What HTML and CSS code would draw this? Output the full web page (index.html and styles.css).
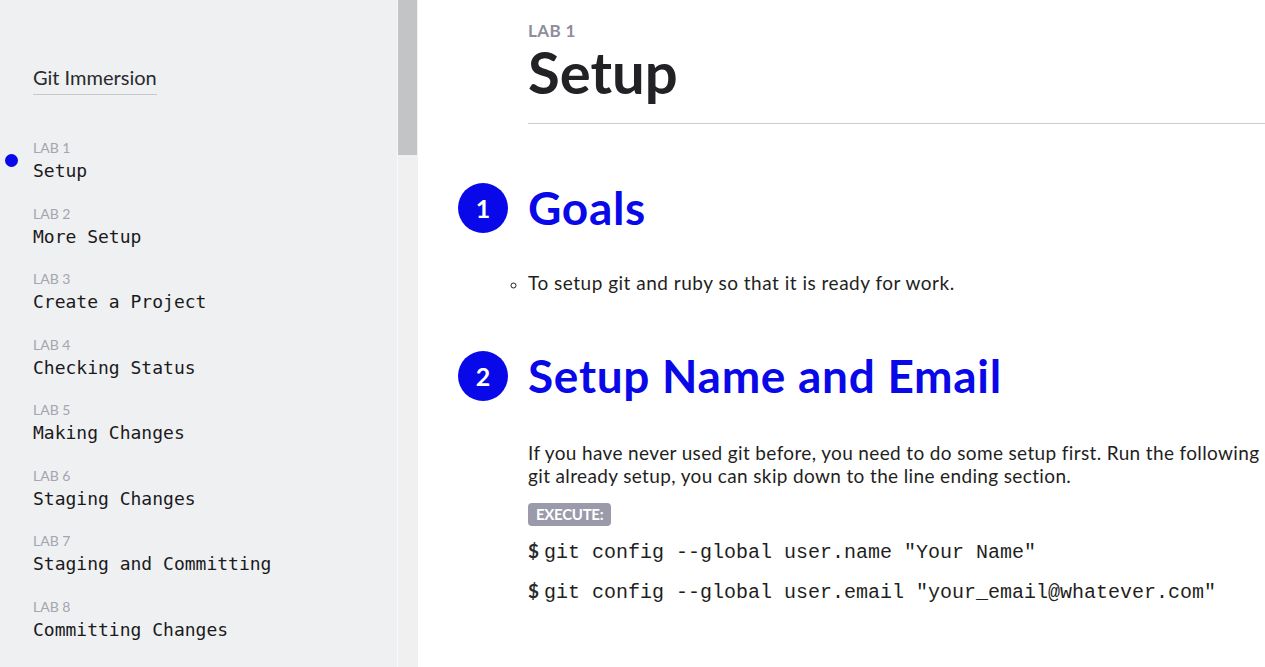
FILE: index.html
```html
<!DOCTYPE html>
<html lang="en">
<head>
<meta charset="utf-8">
<title>Git Immersion - Setup</title>
<link rel="stylesheet" href="styles.css">
</head>
<body>
<aside class="sidebar">
  <nav class="sidebar-inner">
    <a class="brand" href="#">Git Immersion</a>
    <ul class="labs">
      <li class="lab active"><span class="lab-num">LAB 1</span><span class="lab-title">Setup</span></li>
      <li class="lab"><span class="lab-num">LAB 2</span><span class="lab-title">More Setup</span></li>
      <li class="lab"><span class="lab-num">LAB 3</span><span class="lab-title">Create a Project</span></li>
      <li class="lab"><span class="lab-num">LAB 4</span><span class="lab-title">Checking Status</span></li>
      <li class="lab"><span class="lab-num">LAB 5</span><span class="lab-title">Making Changes</span></li>
      <li class="lab"><span class="lab-num">LAB 6</span><span class="lab-title">Staging Changes</span></li>
      <li class="lab"><span class="lab-num">LAB 7</span><span class="lab-title">Staging and Committing</span></li>
      <li class="lab"><span class="lab-num">LAB 8</span><span class="lab-title">Committing Changes</span></li>
      <li class="lab"><span class="lab-num">LAB 9</span><span class="lab-title">Changes, not Files</span></li>
      <li class="lab"><span class="lab-num">LAB 10</span><span class="lab-title">History</span></li>
      <li class="lab"><span class="lab-num">LAB 11</span><span class="lab-title">Aliases</span></li>
      <li class="lab"><span class="lab-num">LAB 12</span><span class="lab-title">Getting Old Versions</span></li>
    </ul>
  </nav>
  <div class="scrollbar"><div class="scroll-thumb"></div></div>
</aside>
<main class="main">
  <article class="content">
    <header class="page-head">
      <div class="page-lab">LAB 1</div>
      <h1 class="page-title">Setup</h1>
    </header>

    <section class="step">
      <h2 class="step-head"><span class="step-num">1</span><span class="step-title">Goals</span></h2>
      <ul class="goals">
        <li>To setup git and ruby so that it is ready for work.</li>
      </ul>
    </section>

    <section class="step">
      <h2 class="step-head"><span class="step-num">2</span><span class="step-title">Setup Name and Email</span></h2>
      <p class="text">If you have never used git before, you need to do some setup first. Run the following commands so that git knows your name and email. If you have<br>git already setup, you can skip down to the line ending section.</p>
      <span class="badge">EXECUTE:</span>
      <div class="cmd"><span class="prompt">$</span><code>git config --global user.name "Your Name"</code></div>
      <div class="cmd"><span class="prompt">$</span><code>git config --global user.email "your_email@whatever.com"</code></div>
    </section>
  </article>
</main>
</body>
</html>
```

FILE: styles.css
```css
html, body {
  margin: 0;
  padding: 0;
}

body {
  display: flex;
  height: 667px;
  overflow: hidden;
  background: #ffffff;
  font-family: Lato, "Open Sans", sans-serif;
  color: #1f1f22;
}

/* ---------- sidebar ---------- */
.sidebar {
  flex: none;
  display: flex;
  width: 418px;
  height: 667px;
  background: #eff0f1;
}

.sidebar-inner {
  flex: 1;
  min-width: 0;
  overflow: hidden;
  padding: 65px 0 0 33px;
}

.scrollbar {
  flex: none;
  width: 20px;
  height: 667px;
  background: #f0f0f1;
  border-left: 1px solid #f8f8f8;
}

.scroll-thumb {
  height: 155px;
  width: 19px;
  background: #c3c4c6;
}

.brand {
  display: inline-block;
  font-size: 20px;
  line-height: 24px;
  color: #2a2a2e;
  text-decoration: none;
  padding-bottom: 5px;
  border-bottom: 1px solid #c8c8cc;
}

.labs {
  list-style: none;
  margin: 44px 0 0;
  padding: 0;
  display: flex;
  flex-direction: column;
  gap: 22.5px;
}

.lab {
  position: relative;
  display: flex;
  flex-direction: column;
  gap: 3px;
}

.lab.active::before {
  content: "";
  position: absolute;
  left: -28px;
  top: 15px;
  width: 13px;
  height: 13px;
  border-radius: 50%;
  background: #0808e8;
}

.lab-num {
  font-size: 14px;
  line-height: 18px;
  color: #a4a5ae;
}

.lab-title {
  font-family: "DejaVu Sans Mono", "Liberation Mono", monospace;
  font-size: 18px;
  line-height: 22px;
  color: #1a1a1d;
  white-space: nowrap;
}

/* ---------- main ---------- */
.main {
  flex: 1;
  min-width: 0;
  height: 667px;
  overflow: hidden;
}

.content {
  width: 1300px;
  padding: 21px 0 0 110px;
}

.page-lab {
  font-size: 17px;
  line-height: 20px;
  font-weight: 700;
  letter-spacing: 0.4px;
  color: #8d8d9c;
}

.page-title {
  margin: 2px 0 0;
  font-size: 58px;
  line-height: 58px;
  font-weight: 700;
  color: #222226;
  padding-bottom: 22px;
  border-bottom: 1px solid #cbcbcf;
}

.step-head {
  display: flex;
  align-items: center;
  gap: 20px;
  margin: 59px 0 0 -70px;
  font-size: 46px;
  line-height: 50px;
  font-weight: 700;
  letter-spacing: 0.7px;
  color: #0808e8;
}

.step-num {
  flex: none;
  width: 50px;
  height: 50px;
  border-radius: 50%;
  background: #0808e8;
  color: #ffffff;
  font-size: 25px;
  line-height: 50px;
  letter-spacing: 0;
  text-align: center;
}

.goals {
  margin: 38px 0 0;
  padding: 0;
  list-style: circle outside;
  font-size: 19px;
  line-height: 24px;
  letter-spacing: 0.5px;
  color: #1f1f22;
}

.goals li::marker {
  font-size: 16px;
}

.step + .step .step-head {
  margin-top: 56px;
}

.text {
  margin: 40px 0 0;
  font-size: 19px;
  line-height: 23px;
  letter-spacing: 0.36px;
  white-space: nowrap;
  color: #1f1f22;
}

.badge {
  display: inline-block;
  margin-top: 16px;
  padding: 0 8px;
  height: 23px;
  line-height: 23px;
  border-radius: 4px;
  background: #9a9aab;
  color: #ffffff;
  font-size: 15px;
  font-weight: 700;
  letter-spacing: -0.3px;
}

.cmd {
  display: flex;
  align-items: baseline;
  margin-top: 13px;
  line-height: 24px;
}

.cmd + .cmd {
  margin-top: 14px;
}

.prompt {
  font-size: 19px;
  font-weight: 700;
  color: #2a2a2e;
  width: 16px;
}

.cmd code {
  font-family: "Liberation Mono", "Courier New", monospace;
  font-size: 20px;
  color: #1f1f22;
}
```
